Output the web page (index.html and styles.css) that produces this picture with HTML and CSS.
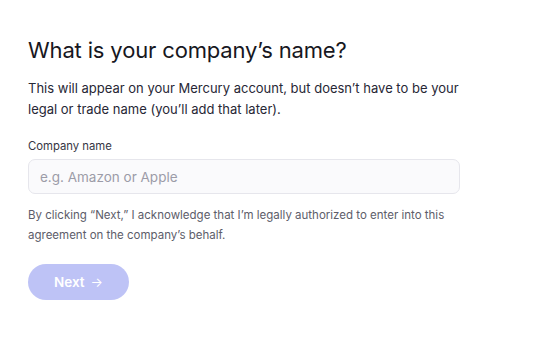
FILE: index.html
```html
<!DOCTYPE html>
<html>
<head>
<meta charset="utf-8">
<link rel="stylesheet" href="styles.css">
</head>
<body>
<main class="form">
  <h1 class="title">What is your company’s name?</h1>
  <p class="lead">This will appear on your Mercury account, but doesn’t have to be your legal or trade name (you’ll add that later).</p>
  <label class="field">
    <span class="label">Company name</span>
    <input class="input" type="text" placeholder="e.g. Amazon or Apple">
  </label>
  <p class="note">By clicking “Next,” I acknowledge that I’m legally authorized to enter into this agreement on the company’s behalf.</p>
  <button class="btn" type="button">Next <span class="arrow">→</span></button>
</main>
</body>
</html>
```
FILE: styles.css
```css
html, body { margin: 0; background: #fff; }
body { font-family: Inter, "Liberation Sans", Arial, sans-serif; color: #1e1e2a; }
.form { width: 432px; padding: 36px 0 0 28px; display: flex; flex-direction: column; align-items: flex-start; }
.title { margin: 0; font-size: 22px; font-weight: 400; line-height: 28px; letter-spacing: -0.15px; color: #171721; }
.lead { margin: 14px 0 0; font-size: 13px; line-height: 21px; color: #272735; }
.field { display: flex; flex-direction: column; width: 100%; margin-top: 18px; }
.label { font-size: 11.3px; line-height: 16px; color: #363644; }
.input { margin-top: 5px; box-sizing: border-box; height: 35px; width: 100%; border: 1px solid #e6e6ec; border-radius: 7px; background: #fafafc; padding: 0 11px; font: inherit; font-size: 13.5px; color: #222; outline: none; }
.input::placeholder { color: #9c9ca8; }
.note { margin: 11px 0 0; font-size: 11.5px; line-height: 20px; color: #5d5d6a; }
.btn { margin-top: 19px; width: 101px; height: 36px; border: none; border-radius: 18px; background: #bec3f6; color: #fff; font-family: inherit; font-size: 13.5px; font-weight: 600; display: flex; align-items: center; justify-content: center; gap: 6px; padding: 0; }
.arrow { font-weight: 400; font-size: 13px; }
```
